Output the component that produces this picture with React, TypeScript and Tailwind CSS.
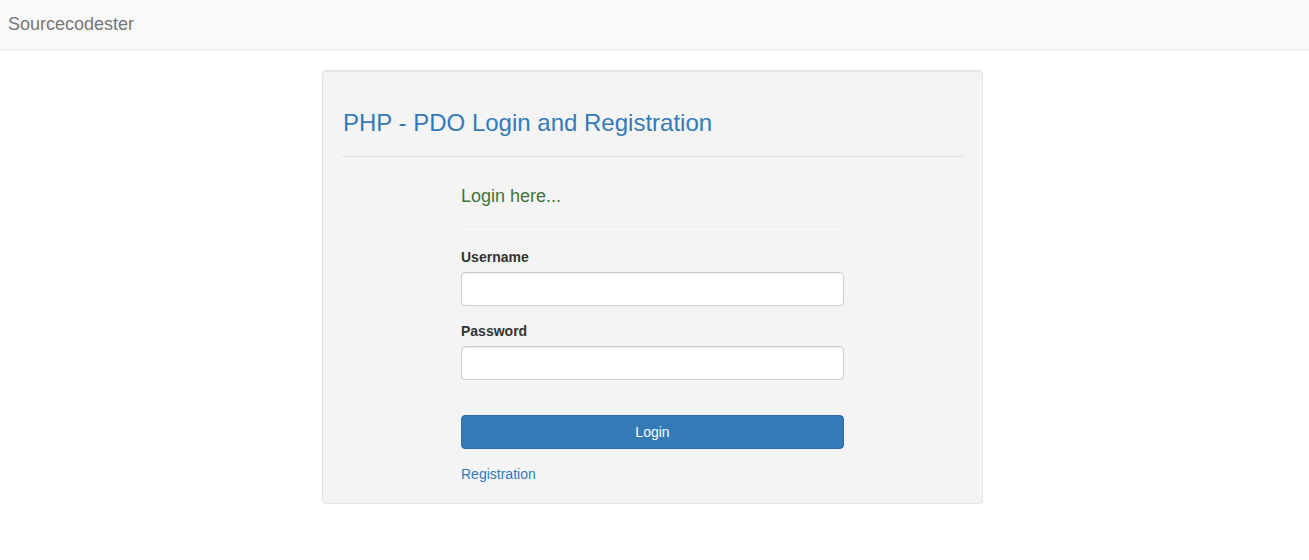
export default function App() {
  return (
    <div className="min-h-[560px] bg-white font-['Liberation_Sans',Arial,sans-serif] text-[14px] leading-[20px] text-[#333]">
      {/* Navbar */}
      <nav className="h-[50px] bg-[#f8f8f8] border-b border-[#e7e7e7] flex items-center px-2">
        <a href="#" className="text-[18px] leading-[20px] text-[#777] pb-[2px]">
          Sourcecodester
        </a>
      </nav>

      <div className="pt-5 pl-[322px]">
        {/* Well */}
        <div className="w-[661px] bg-[#f4f4f4] border border-[#e3e3e3] rounded-[4px] p-[19px] shadow-[inset_0_1px_1px_rgba(0,0,0,0.05)]">
          <h3 className="mt-5 text-[24px] leading-[26.4px] text-[#337ab7] pl-[1px]">
            PHP - PDO Login and Registration
          </h3>
          <hr className="mt-5 mb-5 border-0 border-t border-dotted border-[#ccc]" />

          <div className="w-[383px] mx-auto flow-root">
            <h4 className="mt-[10px] text-[18px] leading-[19px] text-[#3c763d]">Login here...</h4>
            <hr className="mt-5 mb-5 border-0 border-t border-[#eee]" />

            <form onSubmit={(e) => e.preventDefault()}>
              <div className="mb-[15px]">
                <label className="block mb-[5px] font-bold">Username</label>
                <input
                  type="text"
                  className="block w-full h-[34px] px-3 bg-white border border-[#ccc] rounded-[4px] shadow-[inset_0_1px_1px_rgba(0,0,0,0.075)] outline-none"
                />
              </div>
              <div className="mb-[15px]">
                <label className="block mb-[5px] font-bold">Password</label>
                <input
                  type="password"
                  className="block w-full h-[34px] px-3 bg-white border border-[#ccc] rounded-[4px] shadow-[inset_0_1px_1px_rgba(0,0,0,0.075)] outline-none"
                />
              </div>
              <div className="h-5" />
              <div className="mb-[15px]">
                <button
                  type="submit"
                  className="block w-full h-[34px] bg-[#337ab7] border border-[#2e6da4] rounded-[4px] text-white text-[14px]"
                >
                  Login
                </button>
              </div>
              <a href="#" className="text-[#337ab7]">
                Registration
              </a>
            </form>
          </div>
        </div>
      </div>
    </div>
  );
}
